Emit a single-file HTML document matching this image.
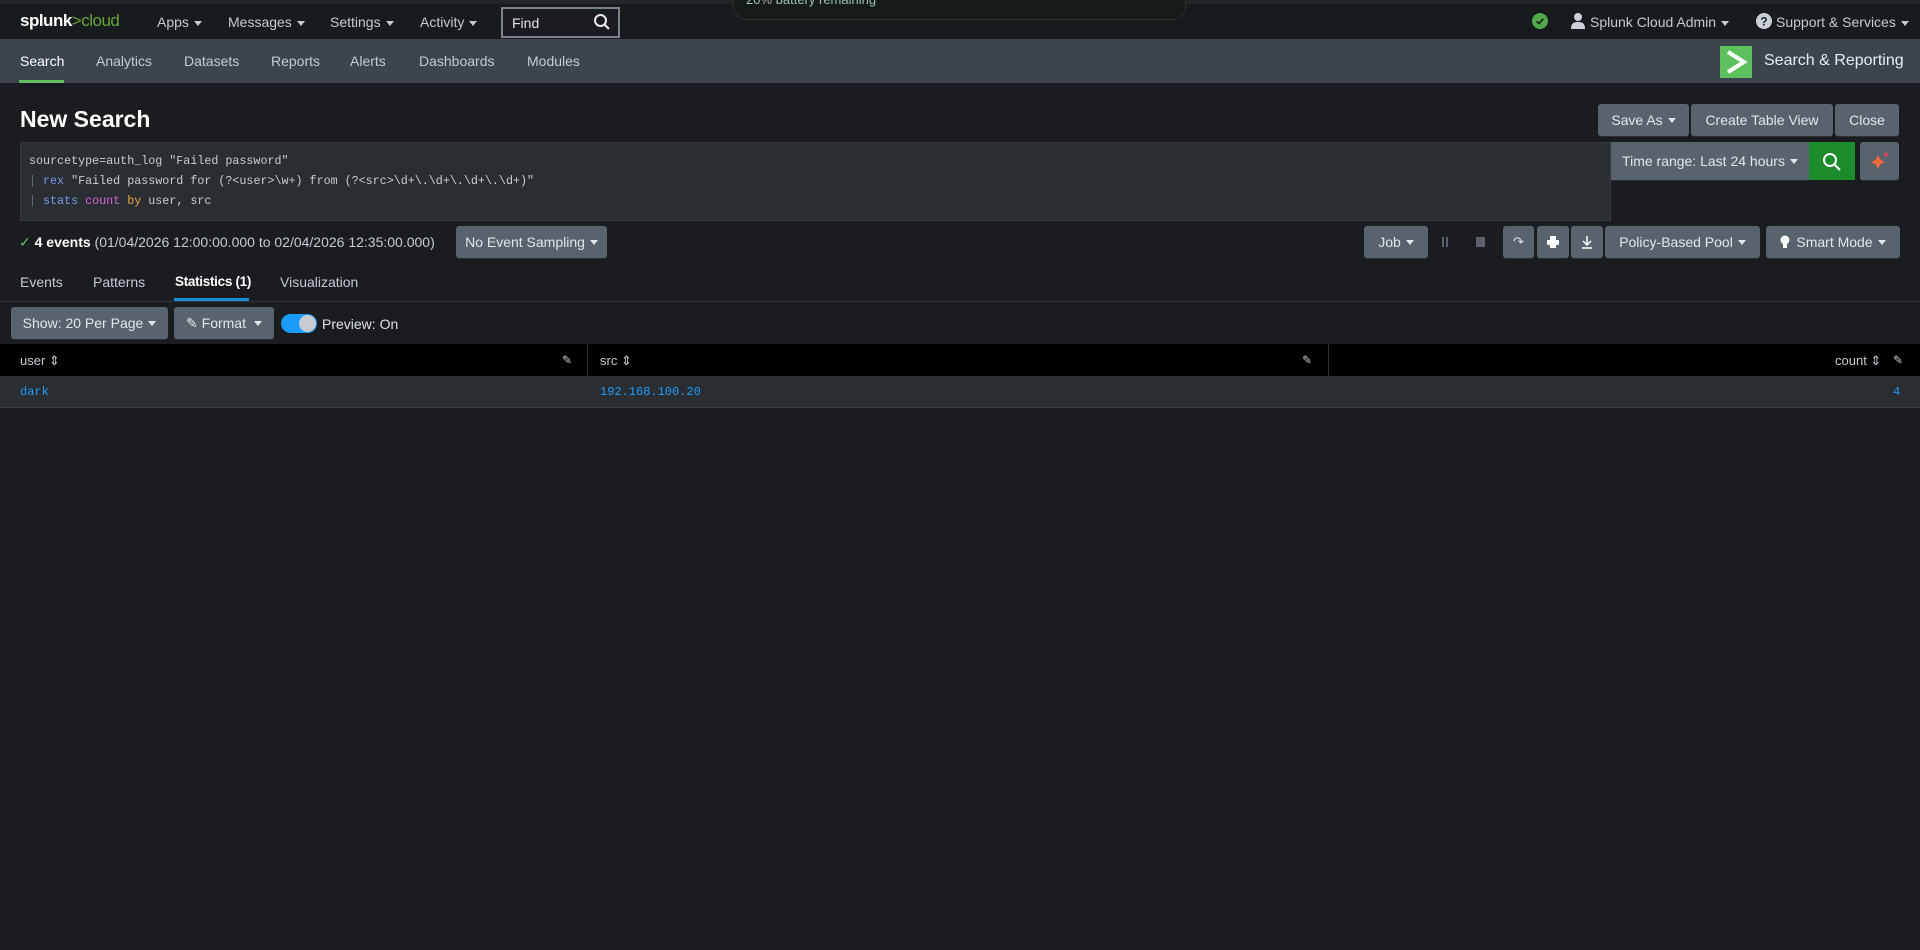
<!DOCTYPE html>
<html><head><meta charset="utf-8"><style>
*{box-sizing:border-box;margin:0;padding:0}
body{width:1920px;height:950px;background:#1a1c20;font-family:"Liberation Sans",sans-serif;color:#c3cbd4;position:relative;overflow:hidden;font-size:14px}
.a{position:absolute;white-space:nowrap}
.top{left:0;top:0;width:1920px;height:39px;background:#171b1e;border-top:4px solid #202727}
.nav{left:0;top:39px;width:1920px;height:44px;background:#3c444d}
.btn{position:absolute;background:#59636e;border-radius:3px;color:#e1e6eb;font-size:14px;display:flex;align-items:center;justify-content:center;box-shadow:0 1px 0 #2a2f34}
.car{display:inline-block;width:0;height:0;border-left:4px solid transparent;border-right:4px solid transparent;border-top:5px solid currentColor;margin-left:5px;vertical-align:middle}
.mono{font-family:"Liberation Mono",monospace}
</style></head><body>
<div class="a top"></div>
<div class="a" style="left:733px;top:-10px;width:453px;height:30px;background:#161b19;border:1px solid #2a302e;border-radius:0 0 14px 14px;"></div>
<div class="a" style="left:746px;top:-8px;font-size:13px;color:#9fc1b0">20% battery remaining</div>
<div class="a" style="left:20px;top:11px;font-size:17px;color:#fff;font-weight:bold;letter-spacing:-0.5px">splunk<span style="color:#65a637;font-weight:normal">&gt;cloud</span></div>
<div class="a" style="left:157px;top:14px;font-size:14px;color:#c3cbd4">Apps<span class="car"></span></div>
<div class="a" style="left:228px;top:14px;font-size:14px">Messages<span class="car"></span></div>
<div class="a" style="left:330px;top:14px;font-size:14px">Settings<span class="car"></span></div>
<div class="a" style="left:420px;top:14px;font-size:14px">Activity<span class="car"></span></div>
<div class="a" style="left:501px;top:7px;width:119px;height:31px;border:2px solid #7a838c;background:#1a1c20"></div>
<div class="a" style="left:512px;top:15px;font-size:14px;color:#dfe3e8">Find</div>
<svg class="a" style="left:593px;top:13px" width="18" height="18" viewBox="0 0 18 18"><circle cx="7.5" cy="7.5" r="5.5" fill="none" stroke="#e8ecef" stroke-width="2"/><path d="M11.5 11.5L16 16" stroke="#e8ecef" stroke-width="2.2"/></svg>
<svg class="a" style="left:1532px;top:13px" width="16" height="16"><circle cx="8" cy="8" r="8" fill="#4fa84a"/><path d="M4.5 8.3l2.3 2.3 4.5-4.8" fill="none" stroke="#1a1c20" stroke-width="1.6"/></svg>
<svg class="a" style="left:1570px;top:12px" width="16" height="18"><circle cx="8" cy="5" r="4" fill="#c9d0d7"/><path d="M1 17c0-6 3-7 7-7s7 1 7 7z" fill="#c9d0d7"/></svg>
<div class="a" style="left:1590px;top:14px;font-size:14px">Splunk Cloud Admin<span class="car"></span></div>
<svg class="a" style="left:1756px;top:13px" width="16" height="16"><circle cx="8" cy="8" r="8" fill="#c9d0d7"/><text x="8" y="12.5" text-anchor="middle" font-size="12" font-weight="bold" fill="#171b1e" font-family="Liberation Sans">?</text></svg>
<div class="a" style="left:1776px;top:14px;font-size:14px">Support &amp; Services<span class="car"></span></div>

<div class="a nav"></div>
<div class="a" style="left:20px;top:53px;font-size:14px;color:#fff">Search</div>
<div class="a" style="left:19px;top:80px;width:45px;height:3px;background:#5cc05c"></div>
<div class="a" style="left:96px;top:53px;font-size:14px">Analytics</div>
<div class="a" style="left:184px;top:53px;font-size:14px">Datasets</div>
<div class="a" style="left:271px;top:53px;font-size:14px">Reports</div>
<div class="a" style="left:350px;top:53px;font-size:14px">Alerts</div>
<div class="a" style="left:419px;top:53px;font-size:14px">Dashboards</div>
<div class="a" style="left:527px;top:53px;font-size:14px">Modules</div>
<div class="a" style="left:1720px;top:46px;width:32px;height:32px;background:#5cc05c"></div>
<svg class="a" style="left:1720px;top:46px" width="32" height="32"><path d="M8 6l16 10-16 10" fill="none" stroke="#fff" stroke-width="4"/></svg>
<div class="a" style="left:1764px;top:52px;font-size:16px;color:#e8ecef">Search &amp; Reporting</div>

<div class="a" style="left:20px;top:106px;font-size:23px;font-weight:bold;color:#fff">New Search</div>
<div class="btn" style="left:1598px;top:104px;width:91px;height:32px">Save As<span class="car"></span></div>
<div class="btn" style="left:1691px;top:104px;width:142px;height:32px">Create Table View</div>
<div class="btn" style="left:1835px;top:104px;width:64px;height:32px">Close</div>

<div class="a" style="left:20px;top:142px;width:1591px;height:79px;background:#2a2e33;border:1px solid #353a40"></div>
<div class="a mono" style="left:29px;top:151px;font-size:11.7px;line-height:20px;color:#c7cdd3">sourcetype=auth_log "Failed password"<br><span style="color:#666d75">|</span> <span style="color:#7b9bea">rex</span> "Failed password for (?&lt;user&gt;\w+) from (?&lt;src&gt;\d+\.\d+\.\d+\.\d+)"<br><span style="color:#666d75">|</span> <span style="color:#7b9bea">stats</span> <span style="color:#d563d4">count</span> <span style="color:#e8a33d">by</span> user, src</div>
<div class="btn" style="left:1611px;top:142px;width:198px;height:38px;border-radius:0">Time range: Last 24 hours<span class="car"></span></div>
<div class="a" style="left:1809px;top:142px;width:46px;height:38px;background:#1b8b2c"></div>
<svg class="a" style="left:1822px;top:152px" width="20" height="20"><circle cx="8" cy="8" r="6" fill="none" stroke="#fff" stroke-width="2"/><path d="M12.5 12.5L18 18" stroke="#fff" stroke-width="2.2"/></svg>
<div class="btn" style="left:1860px;top:142px;width:39px;height:38px"></div>
<svg class="a" style="left:1868px;top:150px" width="24" height="24"><path d="M10 4Q11 11 18 12Q11 13 10 20Q9 13 2 12Q9 11 10 4z" fill="#f06a3c"/><path d="M18 1Q18.5 4 21 4.5Q18.5 5 18 8Q17.5 5 15 4.5Q17.5 4 18 1z" fill="#f04050"/></svg>

<div class="a" style="left:19px;top:234px;font-size:14px"><span style="color:#5cc05c">✓</span> <b style="color:#fff">4 events</b> (01/04/2026 12:00:00.000 to 02/04/2026 12:35:00.000)</div>
<div class="btn" style="left:456px;top:226px;width:151px;height:32px">No Event Sampling<span class="car"></span></div>
<div class="btn" style="left:1364px;top:226px;width:64px;height:32px">Job<span class="car"></span></div>
<div class="a" style="left:1442px;top:237px;width:2px;height:10px;background:#5a636d;box-shadow:4px 0 #5a636d"></div>
<div class="a" style="left:1476px;top:237px;width:9px;height:10px;background:#5a636d"></div>
<div class="btn" style="left:1503px;top:226px;width:31px;height:32px;font-size:13px">↷</div>
<div class="btn" style="left:1537px;top:226px;width:32px;height:32px"><svg width="12" height="12"><rect x="3" y="0" width="6" height="4" fill="#fff"/><rect x="0" y="4" width="12" height="5" rx="1" fill="#fff"/><rect x="3" y="8" width="6" height="4" fill="#fff"/></svg></div>
<div class="btn" style="left:1571px;top:226px;width:32px;height:32px"><svg width="12" height="13"><path d="M6 0v9M2 5l4 4 4-4M1 12h10" fill="none" stroke="#fff" stroke-width="1.5"/></svg></div>
<div class="btn" style="left:1605px;top:226px;width:155px;height:32px">Policy-Based Pool<span class="car"></span></div>
<div class="btn" style="left:1766px;top:226px;width:134px;height:32px"><svg width="10" height="14" style="margin-right:6px"><circle cx="5" cy="5" r="4.5" fill="#fff"/><rect x="3" y="9" width="4" height="4" fill="#fff"/></svg>Smart Mode<span class="car"></span></div>

<div class="a" style="left:20px;top:274px;font-size:14px">Events</div>
<div class="a" style="left:93px;top:274px;font-size:14px">Patterns</div>
<div class="a" style="left:175px;top:274px;font-size:13.5px;color:#fff;font-weight:bold;letter-spacing:-0.3px">Statistics (1)</div>
<div class="a" style="left:280px;top:274px;font-size:14px">Visualization</div>
<div class="a" style="left:0;top:301px;width:1920px;height:1px;background:#2e3338"></div>
<div class="a" style="left:174px;top:298px;width:75px;height:3px;background:#1a8ad4"></div>

<div class="btn" style="left:11px;top:307px;width:157px;height:32px">Show: 20 Per Page<span class="car"></span></div>
<div class="btn" style="left:174px;top:307px;width:100px;height:32px">✎ Format <span class="car" style="margin-left:8px"></span></div>
<div class="a" style="left:281px;top:314px;width:36px;height:19px;border-radius:10px;background:#1a9cff"></div>
<div class="a" style="left:299px;top:315px;width:17px;height:17px;border-radius:9px;background:#c6ccd2"></div>
<div class="a" style="left:322px;top:316px;font-size:14px;color:#dfe3e8">Preview: On</div>

<div class="a" style="left:0;top:344px;width:1920px;height:32px;background:#000"></div>
<div class="a" style="left:587px;top:344px;width:1px;height:32px;background:#2e3338"></div>
<div class="a" style="left:1328px;top:344px;width:1px;height:32px;background:#2e3338"></div>
<div class="a" style="left:20px;top:353px;font-size:13px">user ⇕</div>
<div class="a" style="left:562px;top:353px;font-size:12px">✎</div>
<div class="a" style="left:600px;top:353px;font-size:13px">src ⇕</div>
<div class="a" style="left:1302px;top:353px;font-size:12px">✎</div>
<div class="a" style="left:1835px;top:353px;font-size:13px">count ⇕</div>
<div class="a" style="left:1893px;top:353px;font-size:12px">✎</div>
<div class="a" style="left:0;top:376px;width:1920px;height:32px;background:#2a2e33;border-bottom:1px solid #3a4048"></div>
<div class="a mono" style="left:20px;top:385px;font-size:12px;color:#1a9cff">dark</div>
<div class="a mono" style="left:600px;top:385px;font-size:12px;color:#1a9cff">192.168.100.20</div>
<div class="a mono" style="left:1893px;top:385px;font-size:12px;color:#1a9cff">4</div>
</body></html>
